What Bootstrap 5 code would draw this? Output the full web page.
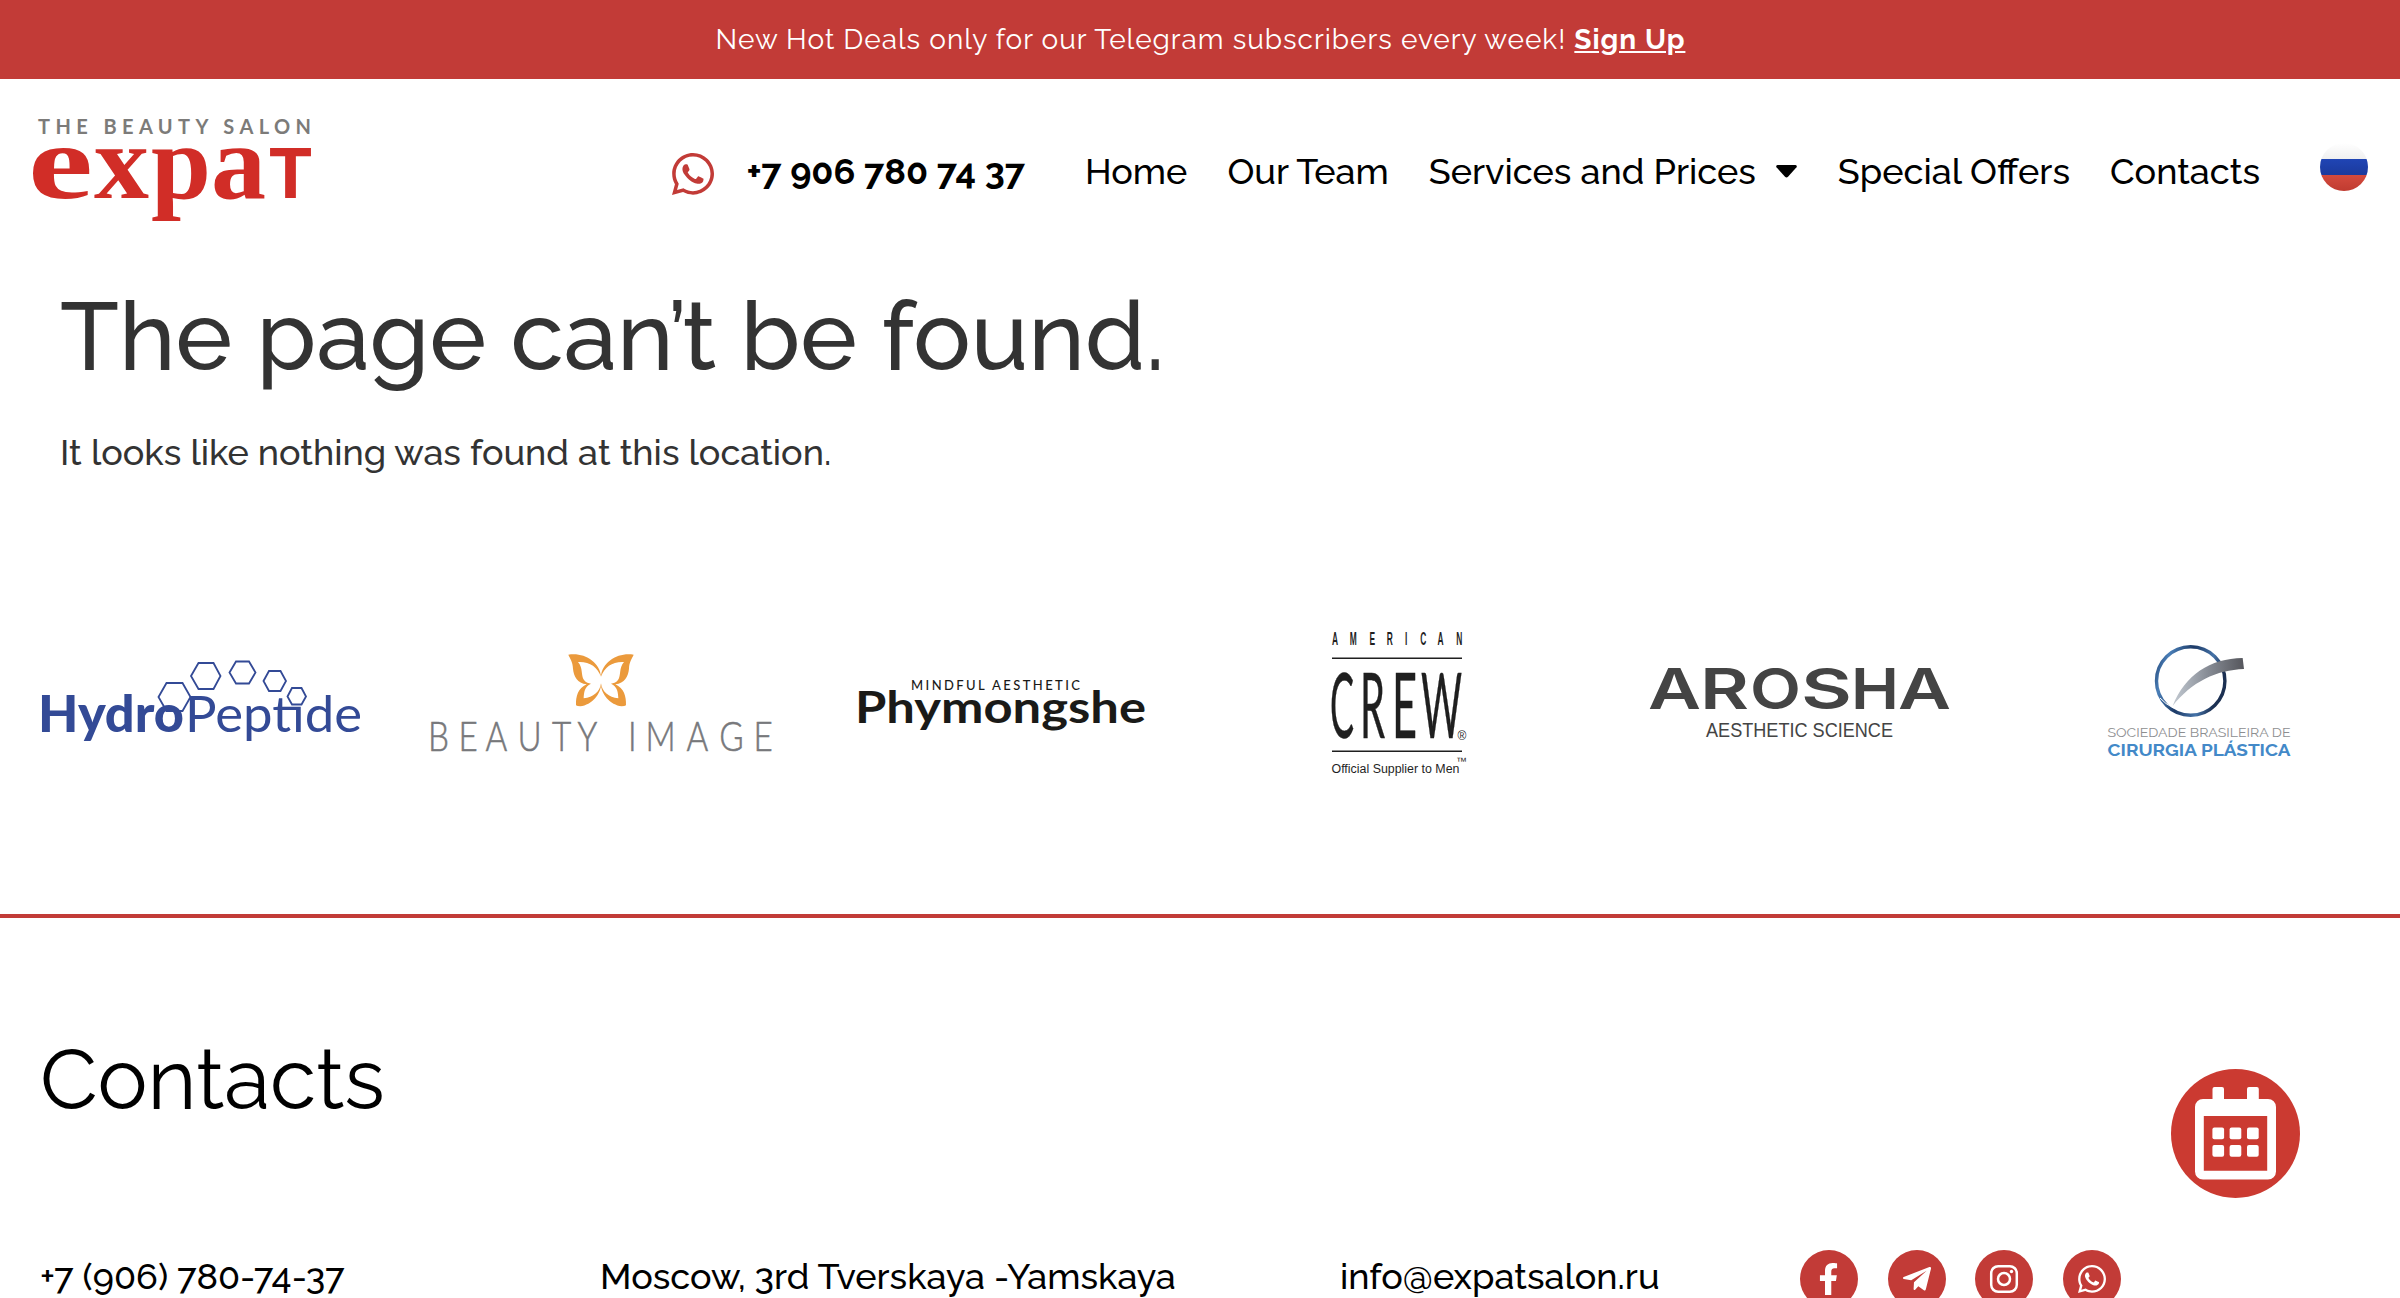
<!DOCTYPE html>
<html lang="en">
<head>
<meta charset="utf-8">
<meta name="viewport" content="width=device-width, initial-scale=1">
<title>Page not found – Expat Beauty Salon</title>
<link rel="stylesheet" href="https://cdn.jsdelivr.net/npm/bootstrap@5.3.0/dist/css/bootstrap.min.css">
<style>
:root { --brand: #c23b37; --ink: #333333; }
body { font-family: Raleway, Lato, sans-serif; font-weight: 500; font-size: 36px; line-height: 54px; color: #000; background: #fff; height: 1298px; overflow: hidden; }
svg { display: block; flex: none; }
.promo { background: var(--brand); color: #fff; height: 79px; font-size: 28px; line-height: 79px; letter-spacing: .98px; font-weight: 400; padding-left: 1px; }
.promo a { color: #fff; font-weight: 700; text-underline-offset: auto; }
.site-head { height: 184px; padding-right: 32px; }
.phone-link { gap: 33px; font-weight: 700; margin-right: 40px; color: #000; }
.phone-link svg { margin-top: 5px; }
.site-nav .nav-link { color: #000; padding: 0 20px; }
.nav-caret { margin-left: 20px; margin-right: 1px; }
.lang-flag { margin-left: 40px; margin-bottom: 8px; }
.not-found { color: var(--ink); padding: 25px 60px 0; }
.not-found h1 { font-size: 96px; line-height: 96px; font-weight: 500; margin-bottom: 41px; }
.brands { margin-top: 121px; }
.site-foot { margin-top: 114px; border-top: 4px solid var(--brand); padding: 120px 40px 0; }
.site-foot h2 { font-size: 84px; line-height: 84px; font-weight: 400; margin-bottom: 127px; }
.foot-info { display: grid; grid-template-columns: 560px 740px 460px auto; white-space: nowrap; }
.socials { gap: 29.6px; margin-top: 1px; }
.book-btn { right: 100px; top: 1069px; }
.ff-lato { font-family: Lato, sans-serif; }
.ff-arial { font-family: "Liberation Sans", sans-serif; }
</style>
<script src="https://cdn.jsdelivr.net/npm/bootstrap@5.3.0/dist/js/bootstrap.bundle.min.js"></script>
</head>
<body>
<svg width="0" height="0" class="position-absolute">
  <symbol id="ic-wa" viewBox="0 32 448 448"><path d="M380.9 97.1C339 55.1 283.2 32 223.9 32c-122.4 0-222 99.6-222 222 0 39.1 10.2 77.3 29.6 111L0 480l117.7-30.9c32.4 17.7 68.9 27 106.1 27h.1c122.3 0 224.1-99.6 224.1-222 0-59.3-25.2-115-67.1-157zm-157 341.6c-33.2 0-65.7-8.9-94-25.7l-6.7-4-69.8 18.3L72 359.2l-4.4-7c-18.5-29.4-28.2-63.3-28.2-98.2 0-101.7 82.8-184.5 184.6-184.5 49.3 0 95.6 19.2 130.4 54.1 34.8 34.9 56.2 81.2 56.1 130.5 0 101.8-84.9 184.6-186.6 184.6zm101.2-138.2c-5.5-2.8-32.8-16.2-37.9-18-5.1-1.9-8.8-2.8-12.5 2.8-3.7 5.6-14.3 18-17.6 21.8-3.2 3.7-6.5 4.2-12 1.4-32.6-16.3-54-29.1-75.5-66-5.7-9.8 5.7-9.1 16.3-30.3 1.8-3.7.9-6.9-.5-9.7-1.4-2.8-12.5-30.1-17.1-41.2-4.5-10.8-9.1-9.3-12.5-9.5-3.2-.2-6.9-.2-10.6-.2-3.7 0-9.7 1.4-14.8 6.9-5.1 5.6-19.4 19-19.4 46.3 0 27.3 19.9 53.7 22.6 57.4 2.8 3.7 39.1 59.7 94.8 83.8 35.2 15.2 49 16.5 66.6 13.9 10.7-1.6 32.8-13.4 37.4-26.4 4.6-13 4.6-24.1 3.2-26.4-1.3-2.5-5-3.9-10.5-6.6z"/></symbol>
</svg>

<div class="promo text-center">New Hot Deals only for our Telegram subscribers every week! <a href="#">Sign Up</a></div>

<header class="site-head d-flex align-items-center">
  <a href="#" class="me-auto">
    <svg width="330" height="184" viewBox="0 79 330 184">
      <text class="ff-lato" x="38" y="134" font-size="20" font-weight="700" fill="#7c7b79" textLength="273" lengthAdjust="spacing">THE BEAUTY SALON</text>
      <g fill="#d12d27" font-family="Liberation Serif, serif" font-weight="700" font-size="106">
        <text x="28" y="198" textLength="65" lengthAdjust="spacingAndGlyphs">e</text>
        <text x="94" y="198" textLength="55" lengthAdjust="spacingAndGlyphs">x</text>
        <text x="151" y="198" textLength="60" lengthAdjust="spacingAndGlyphs">p</text>
        <text x="211" y="198" textLength="55" lengthAdjust="spacingAndGlyphs">a</text>
        <text class="ff-lato" x="269" y="198" font-size="69" font-weight="900" textLength="43" lengthAdjust="spacingAndGlyphs">T</text>
      </g>
    </svg>
  </a>
  <a href="#" class="phone-link d-flex align-items-center text-decoration-none">
    <svg width="42" height="42" fill="#c23b37"><use href="#ic-wa"/></svg>
    <span>+7 906 780 74 37</span>
  </a>
  <nav class="site-nav nav flex-nowrap text-nowrap">
    <a class="nav-link" href="#">Home</a>
    <a class="nav-link" href="#">Our Team</a>
    <a class="nav-link d-flex align-items-center" href="#">Services and Prices
      <svg class="nav-caret" width="21" height="13" viewBox="0 0 21 13"><path d="M1.5 0h18q2 .6 1 2.2l-8.500 9.600q-1.500 1.200-3 0L.500 2.200Q-.500.600 1.500 0z"/></svg></a>
    <a class="nav-link" href="#">Special Offers</a>
    <a class="nav-link" href="#">Contacts</a>
  </nav>
  <svg class="lang-flag" width="48" height="48" viewBox="0 0 48 48">
    <defs>
      <clipPath id="disc"><circle cx="24" cy="24" r="24"/></clipPath>
      <linearGradient id="fw" x2="0" y2="1"><stop stop-color="#fff"/><stop offset="1" stop-color="#f0f0f0"/></linearGradient>
      <linearGradient id="fb" x2="0" y2="1"><stop stop-color="#2045b5"/><stop offset="1" stop-color="#1b3a9d"/></linearGradient>
      <linearGradient id="fr" x2="0" y2="1"><stop stop-color="#d44a3d"/><stop offset="1" stop-color="#c03b30"/></linearGradient>
    </defs>
    <g clip-path="url(#disc)"><path fill="url(#fw)" d="M0 0h48v16H0z"/><path fill="url(#fb)" d="M0 16h48v16H0z"/><path fill="url(#fr)" d="M0 32h48v16H0z"/></g>
  </svg>
</header>

<main>
  <section class="not-found">
    <h1>The page can’t be found.</h1>
    <p class="mb-0">It looks like nothing was found at this location.</p>
  </section>

  <section class="brands row g-0">
    <div class="col-2">
      <svg width="400" height="200" viewBox="0 600 400 200" fill="#334a96">
        <text class="ff-lato" x="38" y="731.700" font-size="51" font-weight="900" textLength="146" lengthAdjust="spacingAndGlyphs">Hydro</text>
        <text class="ff-lato" x="185" y="731.700" font-size="50" font-weight="400" textLength="177" lengthAdjust="spacingAndGlyphs">Peptide</text>
        <g fill="none" stroke="#334a96" stroke-width="1.800">
          <path d="M158.500 697l8-14h16l8 14-8 14h-16z"/>
          <path d="M191 676l7.500-13h15l7 13-7 13h-15z"/>
          <path d="M229.500 672.500l6.500-11h13l6.500 11-6.500 11h-13z"/>
          <path d="M263.500 681l5.500-10h11.500l5.500 10-5.500 10H269z"/>
          <path fill="#fff" d="M287.500 696.500l4.500-8.500h9.500l4.500 8.500-4.500 8H292z"/>
        </g>
      </svg>
    </div>
    <div class="col-2">
      <svg width="400" height="200" viewBox="400 600 400 200">
        <defs><path id="wing" fill-rule="evenodd" d="M505 104C550 96 600 124 603 170C592 140 568 124 534 126C550 144 542 166 552 180C558 188 566 190 573 191C553 200 552 218 551 235C580 232 600 215 603 190C605 220 575 256 541 259Q532 259 528 256C527 228 534 206 560 193C532 190 521 168 519 146C518 124 510 116 505 104Z"/></defs>
        <g fill="#eb9a3c" transform="translate(400 620) scale(.33333)"><use href="#wing"/><use href="#wing" transform="translate(1206 0) scale(-1 1)"/></g>
        <text class="ff-lato" transform="translate(400 0) scale(.8 1)" y="751.500" font-size="41.500" font-weight="300" fill="#77787b" stroke="#77787b" stroke-width=".6" x="35 73 107 147 190 222 249 285 307 358 399 442">BEAUTY IMAGE</text>
      </svg>
    </div>
    <div class="col-2">
      <svg width="400" height="200" viewBox="800 600 400 200" fill="#1a1a18">
        <text class="ff-lato" x="911" y="689.700" font-size="13" textLength="169" lengthAdjust="spacing">MINDFUL AESTHETIC</text>
        <text class="ff-lato" x="855" y="722.500" font-size="44" font-weight="700" textLength="291" lengthAdjust="spacingAndGlyphs">Phymongshe</text>
      </svg>
    </div>
    <div class="col-2">
      <svg width="400" height="200" viewBox="1200 600 400 200" fill="#1f1f1f">
        <g class="ff-arial" font-weight="700" font-size="17.500" transform="translate(1332 0) scale(.48 1)"><text y="645" x="0 37 78 114 152 184 220 259">AMERICAN</text></g>
        <path d="M1332 657.500h130v1.400h-130zM1332 750.500h130v1.400h-130z"/>
        <g class="ff-lato" font-size="92" font-weight="400" stroke="#1f1f1f" stroke-width=".5">
          <text x="1330" y="738" textLength="24" lengthAdjust="spacingAndGlyphs">C</text>
          <text x="1360" y="738" textLength="25" lengthAdjust="spacingAndGlyphs">R</text>
          <text x="1392" y="738" textLength="25" lengthAdjust="spacingAndGlyphs">E</text>
          <text x="1421" y="738" textLength="41" lengthAdjust="spacingAndGlyphs">W</text>
        </g>
        <g class="ff-arial"><text x="1457.500" y="739.500" font-size="12">®</text>
        <text x="1331.500" y="773" font-size="12" textLength="128" lengthAdjust="spacingAndGlyphs">Official Supplier to Men</text>
        <text x="1456" y="765" font-size="11">™</text></g>
      </svg>
    </div>
    <div class="col-2">
      <svg width="400" height="200" viewBox="1600 600 400 200" fill="#444">
        <g font-family="Inter, sans-serif" font-weight="600" font-size="56.500">
          <text x="1648" y="709" textLength="53" lengthAdjust="spacingAndGlyphs">A</text>
          <text x="1700" y="709" textLength="49" lengthAdjust="spacingAndGlyphs">R</text>
          <text x="1750" y="709" textLength="51" lengthAdjust="spacingAndGlyphs">O</text>
          <text x="1801" y="709" textLength="51" lengthAdjust="spacingAndGlyphs">S</text>
          <text x="1851" y="709" textLength="48" lengthAdjust="spacingAndGlyphs">H</text>
          <text x="1898" y="709" textLength="53" lengthAdjust="spacingAndGlyphs">A</text>
        </g>
        <text class="ff-arial" x="1706" y="737" font-size="19.500" textLength="187" lengthAdjust="spacingAndGlyphs">AESTHETIC SCIENCE</text>
      </svg>
    </div>
    <div class="col-2">
      <svg width="400" height="200" viewBox="2000 600 400 200">
        <defs>
          <linearGradient id="ring" x1="0" y1="0" x2="1" y2=".3"><stop stop-color="#20406f"/><stop offset=".2" stop-color="#4a7fb8"/><stop offset=".5" stop-color="#1d3a66"/><stop offset=".8" stop-color="#4573a8"/><stop offset="1" stop-color="#1c3052"/></linearGradient>
          <linearGradient id="blade"><stop stop-color="#c3cad2"/><stop offset=".5" stop-color="#868b94"/><stop offset="1" stop-color="#55565c"/></linearGradient>
        </defs>
        <circle cx="2190.700" cy="681" r="34.200" fill="none" stroke="url(#ring)" stroke-width="3.400"/>
        <g transform="translate(2080 620) scale(.33333)">
          <path d="M240 234Q256 252 280 264" fill="none" stroke="#fff" stroke-width="3"/>
          <path fill="url(#blade)" d="M278 258C315 165 390 115 488 114L492 147C410 150 335 185 278 258Z"/>
        </g>
        <text x="2107.500" y="736.700" font-size="13.800" font-weight="400" fill="#8d8e90" textLength="183" lengthAdjust="spacingAndGlyphs">SOCIEDADE BRASILEIRA DE</text>
        <text x="2107.500" y="756" font-size="17.500" font-weight="700" fill="#4389c8" textLength="183" lengthAdjust="spacingAndGlyphs">CIRURGIA PLÁSTICA</text>
      </svg>
    </div>
  </section>
</main>

<footer class="site-foot">
  <h2>Contacts</h2>
  <div class="foot-info">
    <span>+7 (906) 780-74-37</span>
    <span>Moscow, 3rd Tverskaya -Yamskaya</span>
    <span>info@expatsalon.ru</span>
    <div class="socials d-flex">
      <svg width="58" height="58" viewBox="0 0 58 58"><circle cx="29" cy="29" r="29" fill="#c23b37"/><svg x="18.500" y="13" width="20" height="32" viewBox="0 0 320 512"><path fill="#fff" d="M279.140 288l14.220-92.660h-88.910v-60.130c0-25.350 12.420-50.060 52.240-50.060h40.420V6.260S260.430 0 225.360 0c-73.220 0-121.080 44.380-121.080 124.720v70.620H22.890V288h81.390v224h100.170V288z"/></svg></svg>
      <svg width="58" height="58" viewBox="1887.600 1250 58 58"><circle cx="1916.600" cy="1279" r="29" fill="#c23b37"/><path fill="#fff" transform="translate(1740 1040) scale(.39541 .33333)" d="M478 681L413 711Q409 714 413 717L432 721L471 692L439 727L438 748Q439 752 442 749L450 739L464 751Q468 753 469 748L482 686Q483 680 478 681Z"/></svg>
      <svg width="58" height="58" viewBox="0 0 58 58"><circle cx="29" cy="29" r="29" fill="#c23b37"/><g fill="none" stroke="#fff" stroke-width="2.500"><rect x="16.200" y="16.200" width="25.600" height="25.600" rx="7"/><circle cx="29" cy="29" r="6"/></g><circle cx="36.500" cy="21.500" r="1.700" fill="#fff"/></svg>
      <svg width="58" height="58" viewBox="0 0 58 58"><circle cx="29" cy="29" r="29" fill="#c23b37"/><use href="#ic-wa" x="15" y="15" width="28" height="28" fill="#fff"/></svg>
    </div>
  </div>
</footer>

<a href="#" class="book-btn position-fixed">
  <svg width="129" height="129" viewBox="2171 1069 129 129">
    <circle cx="2235.500" cy="1133.500" r="64.500" fill="#cb3a31"/>
    <g fill="#fff">
      <path fill-rule="evenodd" d="M2203 1099h65a8 8 0 0 1 8 8v64.500a8 8 0 0 1-8 8h-65a8 8 0 0 1-8-8V1107a8 8 0 0 1 8-8zM2203.800 1116v54.700h63.400V1116z"/>
      <path d="M2212.500 1102v-13a2 2 0 0 1 2-2h7.500a2 2 0 0 1 2 2v13zM2247 1102v-13a2 2 0 0 1 2-2h7.800a2 2 0 0 1 2 2v13z"/>
      <rect x="2212.400" y="1127.500" width="11.700" height="11.700" rx="2"/><rect x="2229.600" y="1127.500" width="11.700" height="11.700" rx="2"/><rect x="2247" y="1127.500" width="11.700" height="11.700" rx="2"/>
      <rect x="2212.400" y="1145" width="11.700" height="11.700" rx="2"/><rect x="2229.600" y="1145" width="11.700" height="11.700" rx="2"/><rect x="2247" y="1145" width="11.700" height="11.700" rx="2"/>
    </g>
  </svg>
</a>
</body>
</html>
